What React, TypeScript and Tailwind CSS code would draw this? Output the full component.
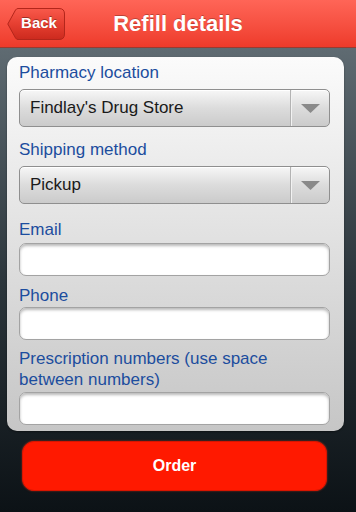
import React from 'react';

const font = "font-['Liberation_Sans',Arial,sans-serif]";

interface FieldProps {
  label: string;
  kind: 'select' | 'input';
  value?: string;
  top: string;
  gap: string;
}

const Field: React.FC<FieldProps> = ({ label, kind, value, top, gap }) => (
  <div className={`flex flex-col ${top}`}>
    <label className={`max-w-[290px] text-[17px] leading-[21px] text-[#1c4d9e] ${gap}`}>{label}</label>
    {kind === 'select' ? (
      <div className="flex h-[38px] w-[311px] rounded-[5px] border border-[#8f8f8f] bg-linear-to-b from-[#f7f7f7] via-[#dcdcdc] to-[#cbcbcb] shadow-[inset_0_1px_0_#ffffff]">
        <span className="flex-1 flex items-center pl-[10px] text-[17px] text-[#1a1a1a]">{value}</span>
        <span className="w-[39px] flex items-center justify-center border-l border-[#b3b3b3] shadow-[inset_1px_0_0_#f2f2f2]">
          <svg width="19" height="9" viewBox="0 0 19 9">
            <polygon points="0,0 19,0 9.5,9" fill="#8a8a8a" />
          </svg>
        </span>
      </div>
    ) : (
      <input
        className="block h-[33px] w-[311px] rounded-[7px] border border-[#a3a3a3] bg-white px-2 text-[17px] shadow-[inset_0_2px_3px_rgba(0,0,0,0.28)] outline-none"
        defaultValue=""
      />
    )}
  </div>
);

export default function App() {
  return (
    <div className={`w-[356px] h-[512px] flex flex-col overflow-hidden ${font}`}>
      {/* Header */}
      <header className="h-[48px] shrink-0 grid grid-cols-[58px_1fr_58px] items-center px-[7px] bg-linear-to-b from-[#ff6557] to-[#ee3a2a] border-b border-[#9a3a30]">
        <button className="relative h-[32px] w-[58px] flex items-center justify-center pl-[9px] pr-[3px]">
          <svg className="absolute inset-0" width="58" height="32" viewBox="0 0 58 32">
            <defs>
              <linearGradient id="bk" x1="0" y1="0" x2="0" y2="1">
                <stop offset="0" stopColor="#f8594b" />
                <stop offset="0.5" stopColor="#e63f31" />
                <stop offset="1" stopColor="#cc2a1e" />
              </linearGradient>
            </defs>
            <path
              d="M11 0.5 H52 Q57.5 0.5 57.5 6 V26 Q57.5 31.5 52 31.5 H11 Q9.5 31.5 8.5 30 L0.8 16 L8.5 2 Q9.5 0.5 11 0.5 Z"
              fill="url(#bk)"
              stroke="#b3261b"
            />
          </svg>
          <span className="relative text-[15px] font-bold text-white [text-shadow:0_-1px_0_rgba(0,0,0,0.35)]">Back</span>
        </button>
        <h1 className="text-center text-[22px] font-bold text-white [text-shadow:0_-1px_0_rgba(0,0,0,0.25)]">Refill details</h1>
        <span />
      </header>

      {/* Body */}
      <main className="flex-1 flex flex-col bg-linear-to-b from-[#5f6b72] via-[#2c363c] to-[#0c1216]">
        <form className="mt-[9px] ml-[7px] w-[337px] rounded-[10px] bg-linear-to-b from-[#fbfbfb] to-[#c6c6c6] pl-[12px] pt-[5px] pb-[6px] shadow-[0_1px_2px_rgba(0,0,0,0.4)]">
          <Field label="Pharmacy location" kind="select" value="Findlay's Drug Store" top="mt-0" gap="mb-[6px]" />
          <Field label="Shipping method" kind="select" value="Pickup" top="mt-[12px]" gap="mb-[6px]" />
          <Field label="Email" kind="input" top="mt-[15px]" gap="mb-[3px]" />
          <Field label="Phone" kind="input" top="mt-[9px]" gap="mb-[1px]" />
          <Field label="Prescription numbers (use space between numbers)" kind="input" top="mt-[8px]" gap="mb-[2px]" />
        </form>

        <button className="mt-[10px] ml-[22px] w-[305px] h-[50px] rounded-[12px] bg-[#ff1900] border border-[#d81500] text-[16px] font-bold text-white shadow-[0_0_2px_rgba(255,60,30,0.6)]">
          Order
        </button>
      </main>
    </div>
  );
}
